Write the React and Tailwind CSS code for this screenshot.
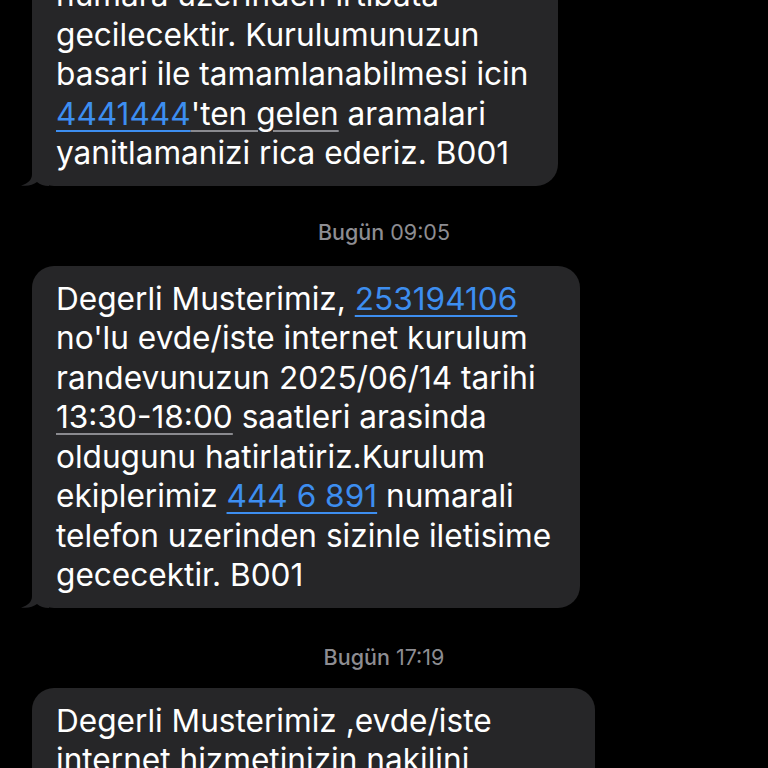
import React from 'react';

const Link = ({ children }) => (
  <span className="text-[#3d8ef0] underline decoration-[#3d8ef0] decoration-[2px] underline-offset-[5px]">{children}</span>
);

const Detected = ({ children }) => (
  <span className="underline decoration-[#8a8a8f] decoration-[2px] underline-offset-[5px]">{children}</span>
);

const Tail = () => (
  <svg
    className="absolute -left-[11px] bottom-0"
    width="28"
    height="22"
    viewBox="0 0 28 22"
    fill="#262628"
  >
    <path d="M11 0 V10 C11 16 7 19.5 0 21.5 C7 22.5 12 21 16 18 C19 20.5 23 22 28 22 V0 Z" />
  </svg>
);

const Bubble = ({ width, children }) => (
  <div className={`relative ml-[32px] ${width} rounded-[22px] bg-[#262628] pl-[24px] pr-[10px] pt-[13px] pb-[13px]`}>
    <p className="whitespace-nowrap text-[31.6px] leading-[39.5px] text-white">{children}</p>
    <Tail />
  </div>
);

const Stamp = ({ day, time }) => (
  <div className="text-center text-[21.5px] leading-[24px] text-[#8d8d92]">
    <span className="font-medium">{day}</span> {time}
  </div>
);

export default function App() {
  return (
    <div className="h-[768px] overflow-hidden bg-black" style={{ fontFamily: 'Inter, "Noto Sans", sans-serif' }}>
      <div className="-mt-[38px] flex flex-col">
        <Bubble width="w-[526px]">
          numara uzerinden irtibata
          <br />
          gecilecektir. Kurulumunuzun
          <br />
          basari ile tamamlanabilmesi icin
          <br />
          <Link>4441444</Link>
          <Detected>'ten gelen</Detected> aramalari
          <br />
          yanitlamanizi rica ederiz. B001
        </Bubble>

        <div className="mt-[34px] mb-[22px]">
          <Stamp day="Bugün" time="09:05" />
        </div>

        <Bubble width="w-[548px]">
          Degerli Musterimiz, <Link>253194106</Link>
          <br />
          no'lu evde/iste internet kurulum
          <br />
          randevunuzun 2025/06/14 tarihi
          <br />
          <Detected>13:30-18:00</Detected> saatleri arasinda
          <br />
          oldugunu hatirlatiriz.Kurulum
          <br />
          ekiplerimiz <Link>444 6 891</Link> numarali
          <br />
          telefon uzerinden sizinle iletisime
          <br />
          gececektir. B001
        </Bubble>

        <div className="mt-[37px] mb-[19px]">
          <Stamp day="Bugün" time="17:19" />
        </div>

        <Bubble width="w-[563px]">
          Degerli Musterimiz ,evde/iste
          <br />
          internet hizmetinizin nakilini
          <br />
          talebiniz alinmistir.
        </Bubble>
      </div>
    </div>
  );
}
